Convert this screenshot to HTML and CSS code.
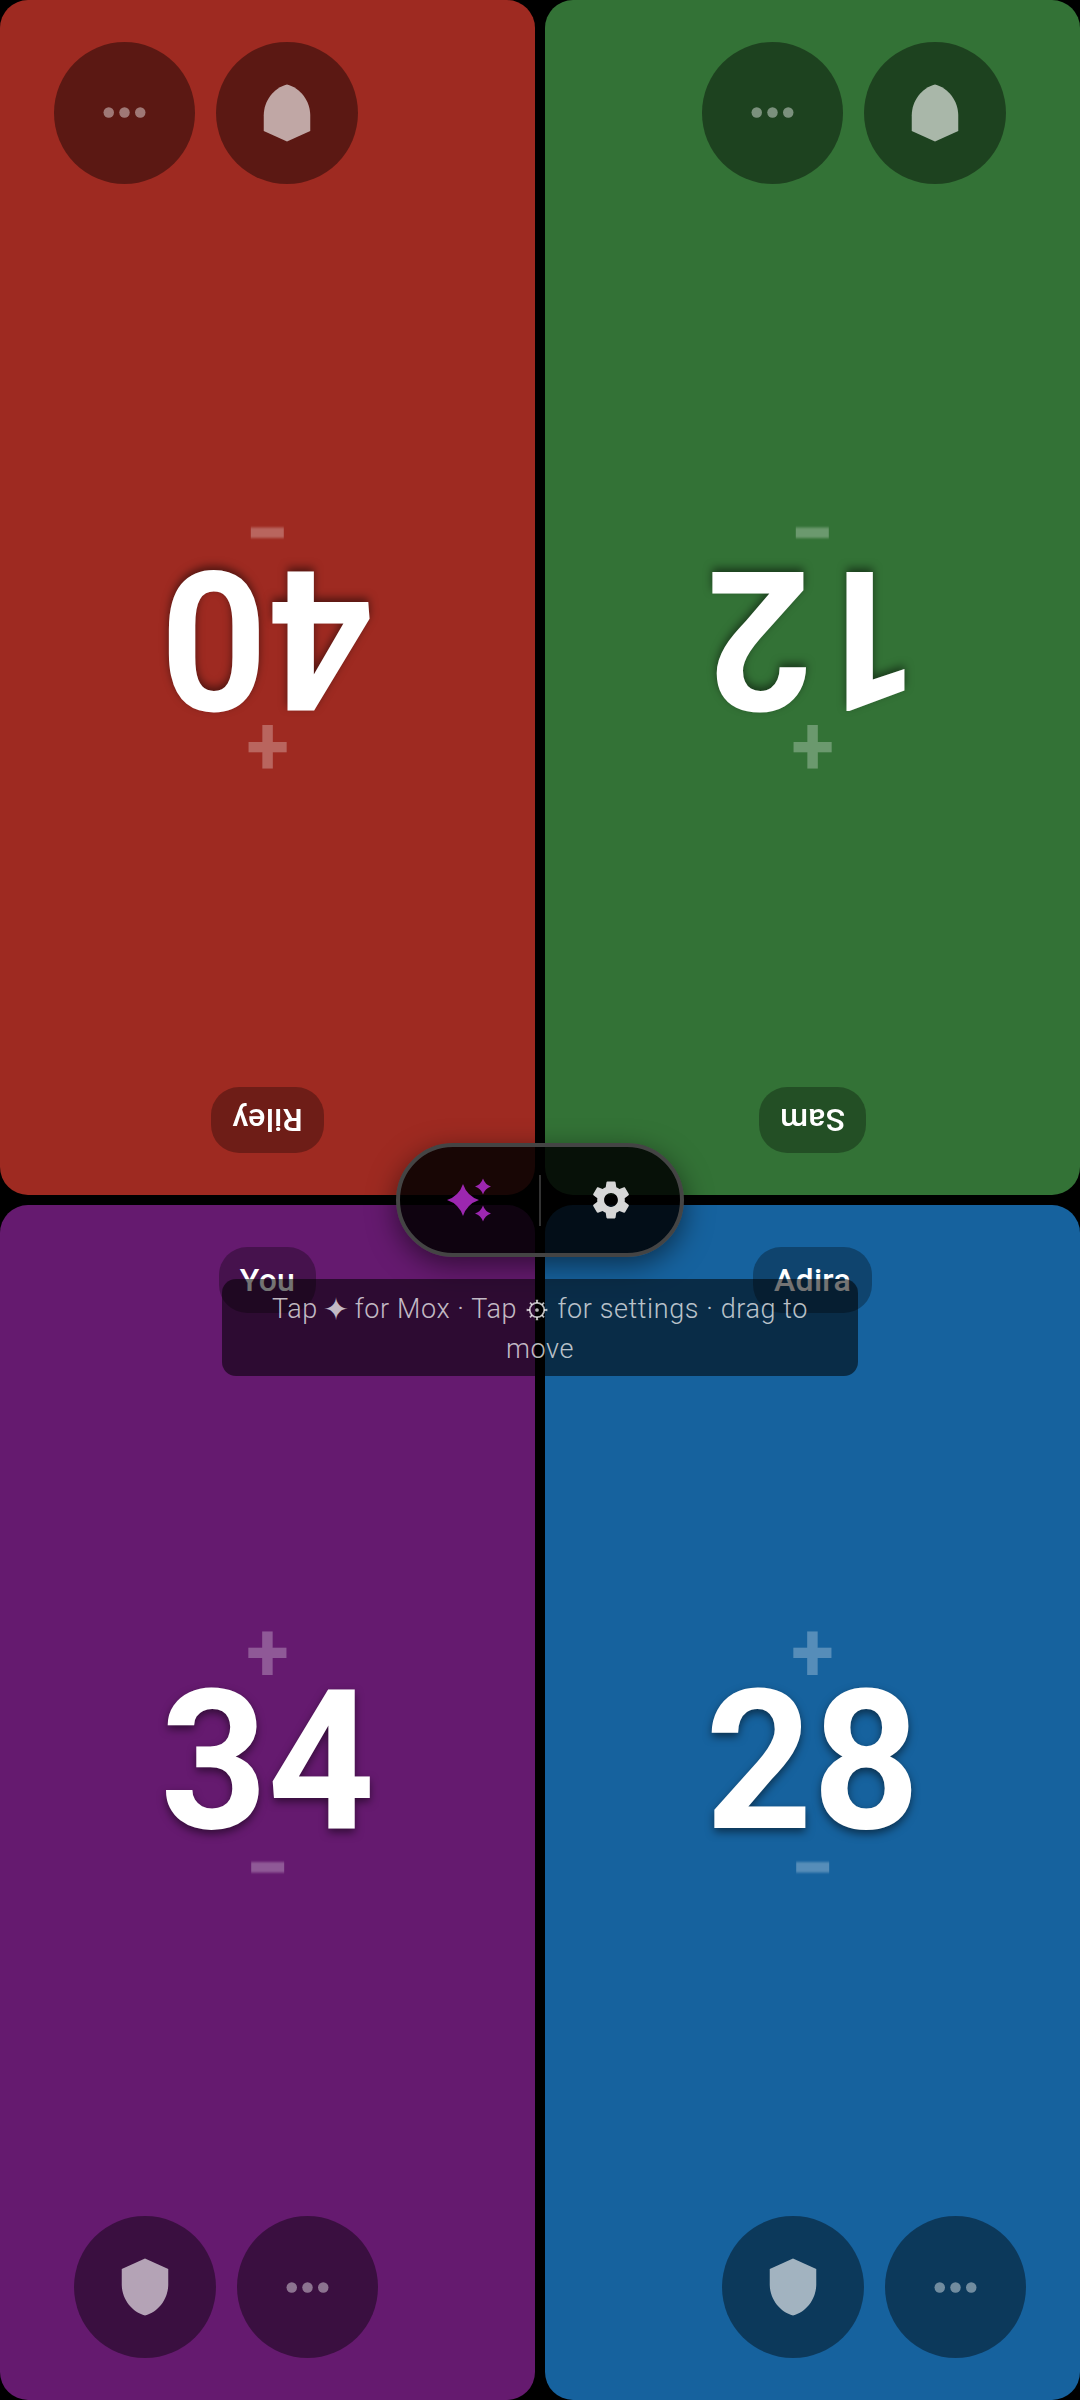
FILE: index.html
```html
<!DOCTYPE html>
<html lang="en">
<head>
    <meta charset="UTF-8">
    <meta name="viewport" content="width=device-width, initial-scale=1.0">
    <title>Life Counter</title>
    <link rel="stylesheet" href="styles.css">
</head>
<body>
    <div class="board">
        <div class="panel flipped red">
            <div class="name">Riley</div>
            <div class="life">
                <div class="step plus">+</div>
                <div class="total">40</div>
                <div class="step minus">−</div>
            </div>
            <div class="actions wide">
                <button class="round"><svg class="shield" viewBox="0 0 24 24"><path d="M12 1L3 5v6c0 5.55 3.84 10.74 9 12 5.16-1.26 9-6.45 9-12V5l-9-4z"/></svg></button>
                <button class="round"><svg class="dots" viewBox="0 0 24 24"><circle cx="6" cy="12" r="2"/><circle cx="12" cy="12" r="2"/><circle cx="18" cy="12" r="2"/></svg></button>
            </div>
        </div>
        <div class="panel flipped green">
            <div class="name">Sam</div>
            <div class="life">
                <div class="step plus">+</div>
                <div class="total">12</div>
                <div class="step minus">−</div>
            </div>
            <div class="actions">
                <button class="round"><svg class="shield" viewBox="0 0 24 24"><path d="M12 1L3 5v6c0 5.55 3.84 10.74 9 12 5.16-1.26 9-6.45 9-12V5l-9-4z"/></svg></button>
                <button class="round"><svg class="dots" viewBox="0 0 24 24"><circle cx="6" cy="12" r="2"/><circle cx="12" cy="12" r="2"/><circle cx="18" cy="12" r="2"/></svg></button>
            </div>
        </div>
        <div class="panel purple">
            <div class="name">You</div>
            <div class="life">
                <div class="step plus">+</div>
                <div class="total">34</div>
                <div class="step minus">−</div>
            </div>
            <div class="actions">
                <button class="round"><svg class="shield" viewBox="0 0 24 24"><path d="M12 1L3 5v6c0 5.55 3.84 10.74 9 12 5.16-1.26 9-6.45 9-12V5l-9-4z"/></svg></button>
                <button class="round"><svg class="dots" viewBox="0 0 24 24"><circle cx="6" cy="12" r="2"/><circle cx="12" cy="12" r="2"/><circle cx="18" cy="12" r="2"/></svg></button>
            </div>
        </div>
        <div class="panel blue">
            <div class="name">Adira</div>
            <div class="life">
                <div class="step plus">+</div>
                <div class="total">28</div>
                <div class="step minus">−</div>
            </div>
            <div class="actions wide">
                <button class="round"><svg class="shield" viewBox="0 0 24 24"><path d="M12 1L3 5v6c0 5.55 3.84 10.74 9 12 5.16-1.26 9-6.45 9-12V5l-9-4z"/></svg></button>
                <button class="round"><svg class="dots" viewBox="0 0 24 24"><circle cx="6" cy="12" r="2"/><circle cx="12" cy="12" r="2"/><circle cx="18" cy="12" r="2"/></svg></button>
            </div>
        </div>

        <div class="control">
            <button class="control-btn">
                <svg class="sparkle" viewBox="0 0 46 60">
                    <path d="M16 14Q20 26 32 30 20 34 16 46 12 34 0 30 12 26 16 14z"/>
                    <path d="M36 8.5Q38 14.5 44 16.5 38 18.5 36 24.5 34 18.5 28 16.5 34 14.5 36 8.5z"/>
                    <path d="M36 35.5Q38 41.5 44 43.5 38 45.5 36 51.5 34 45.5 28 43.5 34 41.5 36 35.5z"/>
                </svg>
            </button>
            <div class="divider"></div>
            <button class="control-btn">
                <svg class="gear" viewBox="0 0 24 24"><path d="M19.14 12.94c.04-.3.06-.61.06-.94 0-.32-.02-.64-.07-.94l2.03-1.58c.18-.14.23-.41.12-.61l-1.92-3.32c-.12-.22-.37-.29-.59-.22l-2.39.96c-.5-.38-1.03-.7-1.62-.94l-.36-2.54c-.04-.24-.24-.41-.48-.41h-3.84c-.24 0-.43.17-.47.41l-.36 2.54c-.59.24-1.13.57-1.62.94l-2.39-.96c-.22-.08-.47 0-.59.22L2.74 8.87c-.12.21-.08.47.12.61l2.03 1.58c-.05.3-.09.63-.09.94s.02.64.07.94l-2.03 1.58c-.18.14-.23.41-.12.61l1.92 3.32c.12.22.37.29.59.22l2.39-.96c.5.38 1.03.7 1.62.94l.36 2.54c.05.24.24.41.48.41h3.84c.24 0 .44-.17.47-.41l.36-2.54c.59-.24 1.13-.56 1.62-.94l2.39.96c.22.08.47 0 .59-.22l1.92-3.32c.12-.22.07-.47-.12-.61l-2.01-1.58zM12 15.6c-1.98 0-3.6-1.62-3.6-3.6s1.62-3.6 3.6-3.6 3.6 1.62 3.6 3.6-1.62 3.6-3.6 3.6z"/></svg>
            </button>
        </div>
        <div class="hint">Tap <span class="star">✦</span> for Mox · Tap <svg class="cog" viewBox="0 0 22 22"><circle class="cog-ring" cx="11" cy="11" r="6.6"/><circle cx="11" cy="11" r="1.7"/><path d="M9.8 1.5h2.4L11.6 4.6h-1.2zM9.8 20.5h2.4L11.6 17.4h-1.2zM1.5 9.8v2.4L4.6 11.6v-1.2zM20.5 9.8v2.4L17.4 11.6v-1.2zM4 4.9L5.3 3.7 7 5.9 6 6.9zM18 4.9L16.7 3.7 15 5.9 16 6.9zM4 17.1L5.3 18.3 7 16.1 6 15.1zM18 17.1L16.7 18.3 15 16.1 16 15.1z"/></svg> for settings · drag to move</div>
    </div>
</body>
</html>
```

FILE: styles.css
```css
* {
    box-sizing: border-box;
}
html, body {
    margin: 0;
    background: #000;
}
.board {
    position: relative;
    width: 1080px;
    height: 2400px;
    display: grid;
    grid-template-columns: 535px 535px;
    grid-template-rows: 1195px 1195px;
    gap: 10px;
    font-family: Roboto, "Noto Sans", sans-serif;
    color: #fff;
}
.panel {
    display: flex;
    flex-direction: column;
    align-items: center;
    border-radius: 28px;
    padding: 42px 0;
}
.flipped {
    transform: rotate(180deg);
}
.red { background: #9e2a21; }
.green { background: #337236; }
.purple { background: #651a6f; }
.blue { background: #16629e; }

.name {
    height: 66px;
    padding: 0 21px;
    border-radius: 28px;
    background: rgba(0, 0, 0, 0.3);
    font-size: 32px;
    font-weight: 500;
    line-height: 66px;
    letter-spacing: 0.3px;
}
.life {
    flex: 1;
    display: flex;
    flex-direction: column;
    align-items: center;
    justify-content: center;
    padding-bottom: 8px;
}
.step {
    height: 66px;
    font-size: 78px;
    font-weight: 700;
    line-height: 66px;
    color: rgba(255, 255, 255, 0.28);
    filter: blur(0.7px);
}
.plus {
    transform: scaleY(1.06);
}
.minus {
    transform: scaleY(1.2);
}
.total {
    height: 150px;
    font-size: 187px;
    font-weight: 700;
    line-height: 150px;
    text-shadow: 0 4px 8px rgba(0, 0, 0, 0.5);
    transform: translateY(1px) scaleY(1.04);
}
.actions {
    align-self: flex-start;
    display: flex;
    gap: 21px;
    margin-left: 74px;
}
.actions.wide {
    margin-left: 177px;
}
.round {
    width: 141.5px;
    height: 142px;
    display: flex;
    align-items: center;
    justify-content: center;
    padding: 0;
    border: 0;
    border-radius: 50%;
    background: rgba(0, 0, 0, 0.42);
}
.shield {
    width: 62px;
    height: 62px;
    fill: rgba(255, 255, 255, 0.62);
}
.dots {
    width: 63px;
    height: 63px;
    fill: rgba(255, 255, 255, 0.42);
}

.control {
    position: absolute;
    left: 396px;
    top: 1143px;
    width: 288px;
    height: 114px;
    display: flex;
    align-items: center;
    border: 4px solid #444;
    border-radius: 57px;
    background: rgba(0, 0, 0, 0.85);
    box-shadow: 0 8px 28px rgba(0, 0, 0, 0.5);
}
.control-btn {
    flex: 1;
    height: 100%;
    display: flex;
    align-items: center;
    justify-content: center;
    padding: 0;
    border: 0;
    background: none;
}
.divider {
    width: 2px;
    height: 51px;
    background: rgba(255, 255, 255, 0.2);
}
.sparkle {
    width: 46px;
    height: 60px;
    fill: #9c27b0;
}
.gear {
    width: 46px;
    height: 46px;
    fill: #d6d6d6;
}
.hint {
    position: absolute;
    left: 222px;
    top: 1279px;
    width: 636px;
    height: 97px;
    padding: 10px 32px;
    border-radius: 14px;
    background: rgba(0, 0, 0, 0.55);
    color: rgba(255, 255, 255, 0.72);
    font-size: 27px;
    font-weight: 300;
    line-height: 40px;
    letter-spacing: 0.6px;
    text-align: center;
}
.star {
    margin: 0 -2px;
    font-family: "DejaVu Sans", sans-serif;
    font-size: 31px;
    line-height: 0;
    vertical-align: -2px;
}
.cog {
    width: 24px;
    height: 24px;
    margin: 0 1px;
    vertical-align: -4px;
    fill: rgba(255, 255, 255, 0.72);
}
.cog-ring {
    fill: none;
    stroke: rgba(255, 255, 255, 0.72);
    stroke-width: 1.6;
}
```
